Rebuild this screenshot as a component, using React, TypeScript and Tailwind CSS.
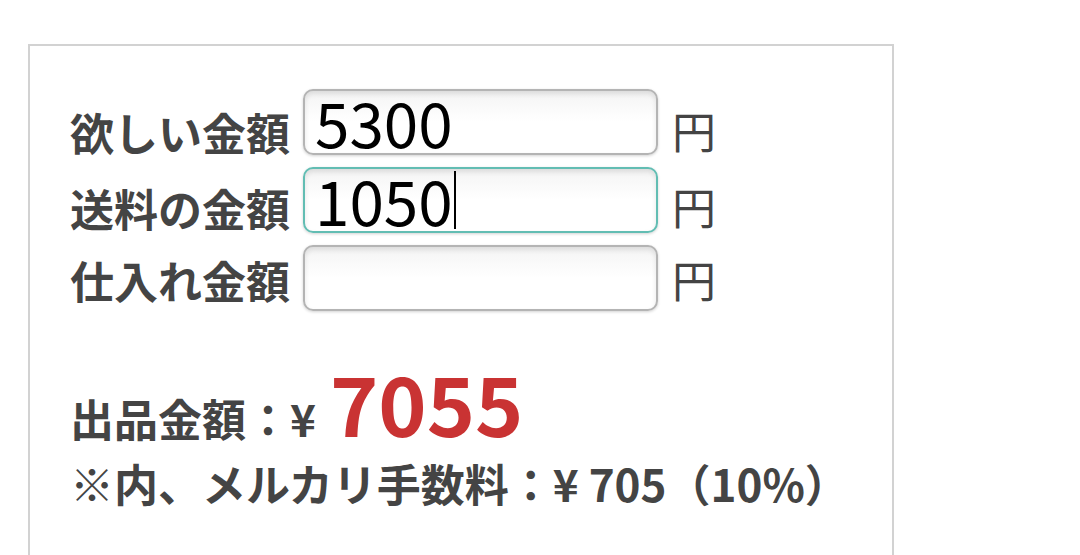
const FONT = "font-['Noto_Sans_CJK_JP','Noto_Sans',sans-serif]"

type Field = { label: string; value: string; focused?: boolean; shift: string; unitShift: string }

const FIELDS: Field[] = [
  { label: '欲しい金額', value: '5300', shift: 'mb-[1px]', unitShift: 'mb-[3px]' },
  { label: '送料の金額', value: '1050', focused: true, shift: 'mb-[3px]', unitShift: 'mb-[5px]' },
  { label: '仕入れ金額', value: '', shift: 'mb-[9px]', unitShift: 'mb-[10px]' },
]

function FakeInput({ value, focused }: { value: string; focused?: boolean }) {
  return (
    <div
      className={`flex h-[66px] w-[355px] items-center overflow-hidden rounded-[10px] border-2 bg-linear-to-b from-[#f4f4f4] via-white to-white pl-[10px] text-[62px] font-normal leading-[66px] text-black shadow-[inset_0_3px_5px_rgba(0,0,0,0.10),0_1px_3px_rgba(0,0,0,0.18)] ${
        focused ? 'border-[#62bdb3]' : 'border-[#b4b4b4]'
      }`}
    >
      <span className="-translate-y-[1px]">{value}</span>
      {focused && <span className="ml-[1px] h-[58px] w-[2px] bg-black" />}
    </div>
  )
}

export default function App() {
  return (
    <div className={`h-[555px] w-[1080px] overflow-hidden bg-white ${FONT}`}>
      <div className="ml-[28px] mt-[44px] h-[560px] w-[866px] border-2 border-[#d2d2d2] pl-[40px] pt-[43px]">
        <div className="flex flex-col gap-[12px]">
          {FIELDS.map((f) => (
            <div key={f.label} className="flex items-end">
              <span className={`w-[233px] text-[44px] font-bold leading-none text-[#444] ${f.shift}`}>{f.label}</span>
              <FakeInput value={f.value} focused={f.focused} />
              <span className={`ml-[14px] text-[44px] leading-none text-[#444] ${f.unitShift}`}>円</span>
            </div>
          ))}
        </div>

        <div className="mt-[50px] flex items-baseline text-[44px] font-bold leading-none text-[#444]">
          <span>出品金額：¥</span>
          <span className="ml-[14px] text-[82px] text-[#c93333]">7055</span>
        </div>
        <div className="mt-[18px] text-[44px] font-bold leading-none text-[#444]">※内、メルカリ手数料：¥ 705（10%）</div>
      </div>
    </div>
  )
}
